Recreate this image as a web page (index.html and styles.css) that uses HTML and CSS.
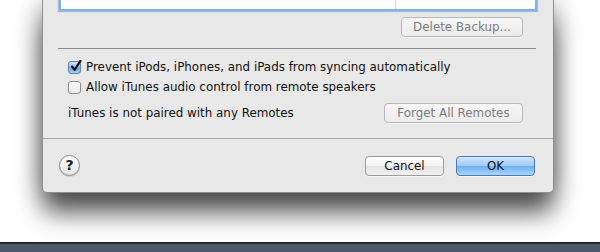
FILE: index.html
```html
<!DOCTYPE html>
<html lang="en">
<head>
    <meta charset="UTF-8">
    <title>iTunes Preferences - Devices</title>
    <link rel="stylesheet" href="styles.css">
</head>
<body>
    <div class="desk">
        <div class="dialog">
            <!-- Backup list (top is scrolled off screen) -->
            <div class="backup-table">
                <div class="col-name"></div>
                <div class="col-date"></div>
            </div>
            <div class="button-row">
                <button class="mac-button" disabled>Delete Backup...</button>
            </div>

            <div class="separator"></div>

            <div class="options">
                <label class="check-row">
                    <span class="checkbox checked">
                        <svg width="13" height="13" viewBox="0 0 13 13"><path d="M3 6.5 L5.6 9.8 L11.5 0.8" fill="none" stroke="#111" stroke-width="2.2" stroke-linecap="round" stroke-linejoin="round"/></svg>
                    </span>
                    Prevent iPods, iPhones, and iPads from syncing automatically
                </label>
                <label class="check-row">
                    <span class="checkbox"></span>
                    Allow iTunes audio control from remote speakers
                </label>
                <div class="remotes-row">
                    <span>iTunes is not paired with any Remotes</span>
                    <button class="mac-button" disabled>Forget All Remotes</button>
                </div>
            </div>

            <div class="footer">
                <button class="help-button">?</button>
                <div class="footer-actions">
                    <button class="mac-button footer-button">Cancel</button>
                    <button class="mac-button footer-button default-button">OK</button>
                </div>
            </div>
        </div>
    </div>
    <div class="dock-bar"></div>
</body>
</html>
```

FILE: styles.css
```css
* {
    box-sizing: border-box;
    margin: 0;
    padding: 0;
}

body {
    width: 600px;
    height: 252px;
    overflow: hidden;
    display: flex;
    flex-direction: column;
    background-color: #ffffff;
    font-family: 'DejaVu Sans', Verdana, sans-serif;
    font-size: 11.9px;
    color: #111111;
}

.desk {
    flex: 1;
    padding-left: 42px;
}

.dialog {
    width: 512px;
    height: 193px;
    background-color: #e8e8e8;
    border: 1px solid #8e8e8e;
    border-top: none;
    border-radius: 0 0 5px 5px;
    box-shadow: 0 22px 26px -2px rgba(0,0,0,0.6), 0 4px 26px rgba(0,0,0,0.4);
    display: flex;
    flex-direction: column;
}

.backup-table {
    height: 11px;
    margin: 0 16px;
    display: flex;
    background-color: #ffffff;
    border: 2px solid #7fb0e8;
    border-top: none;
    box-shadow: 0 0 1px 1px rgba(90,140,210,0.45);
}

.col-name {
    width: 335px;
    border-right: 1px solid #d4d4d4;
}

.col-date {
    flex: 1;
}

.button-row {
    display: flex;
    justify-content: flex-end;
    padding-right: 30px;
    margin-top: 6px;
}

.mac-button {
    height: 20px;
    padding: 0;
    white-space: nowrap;
    font-family: inherit;
    font-size: 11.9px;
    color: #111111;
    background: linear-gradient(#ffffff, #f1f1f1 50%, #e4e4e4 51%, #f0f0f0);
    border: 1px solid #9c9c9c;
    border-radius: 4px;
    box-shadow: 0 1px 0 rgba(255,255,255,0.6);
}

.mac-button:disabled {
    color: #7c7c7c;
    background: linear-gradient(#f6f6f6, #ececec);
    border-color: #b8b8b8;
}

.button-row .mac-button {
    width: 122px;
}

.separator {
    height: 1px;
    margin: 11px 17px 0 15px;
    background-color: #8a8a8a;
}

.options {
    padding: 8px 0 0 25px;
}

.check-row {
    display: flex;
    align-items: center;
    gap: 5px;
    height: 20px;
}

.checkbox {
    width: 13px;
    height: 13px;
    border: 1px solid #8c8c8c;
    border-radius: 3px;
    background: linear-gradient(#ffffff, #e6e6e6);
    position: relative;
}

.checkbox.checked {
    border-color: #5b7fae;
    background: linear-gradient(#d6e8fb, #8ab8ee 50%, #6aa3e6 51%, #a9d0f7);
}

.checkbox svg {
    position: absolute;
    left: 0;
    top: -2px;
}

.remotes-row {
    display: flex;
    align-items: center;
    justify-content: space-between;
    padding-right: 30px;
    margin-top: 6px;
    height: 20px;
}

.remotes-row .mac-button {
    width: 139px;
}

.footer {
    margin-top: 15px;
    border-top: 1px solid #a6a6a6;
    flex: 1;
    display: flex;
    align-items: center;
    justify-content: space-between;
    padding: 0 18px 0 16px;
}

.help-button {
    width: 21px;
    height: 21px;
    border-radius: 50%;
    border: 1px solid #8a8a8a;
    background: linear-gradient(#ffffff, #e2e2e2);
    font-family: inherit;
    font-size: 14px;
    font-weight: bold;
    color: #222;
    line-height: 19px;
    box-shadow: 0 1px 1px rgba(0,0,0,0.15);
}

.footer-actions {
    display: flex;
    gap: 12px;
}

.footer-button {
    width: 79px;
}

.default-button {
    border-color: #4d79b0;
    background: linear-gradient(#cfe5fb, #9ccaf6 50%, #6fb0f1 51%, #a8d6fb);
}

.dock-bar {
    height: 10px;
    background-color: #4f586b;
    border-top: 2px solid #23272f;
}
```
